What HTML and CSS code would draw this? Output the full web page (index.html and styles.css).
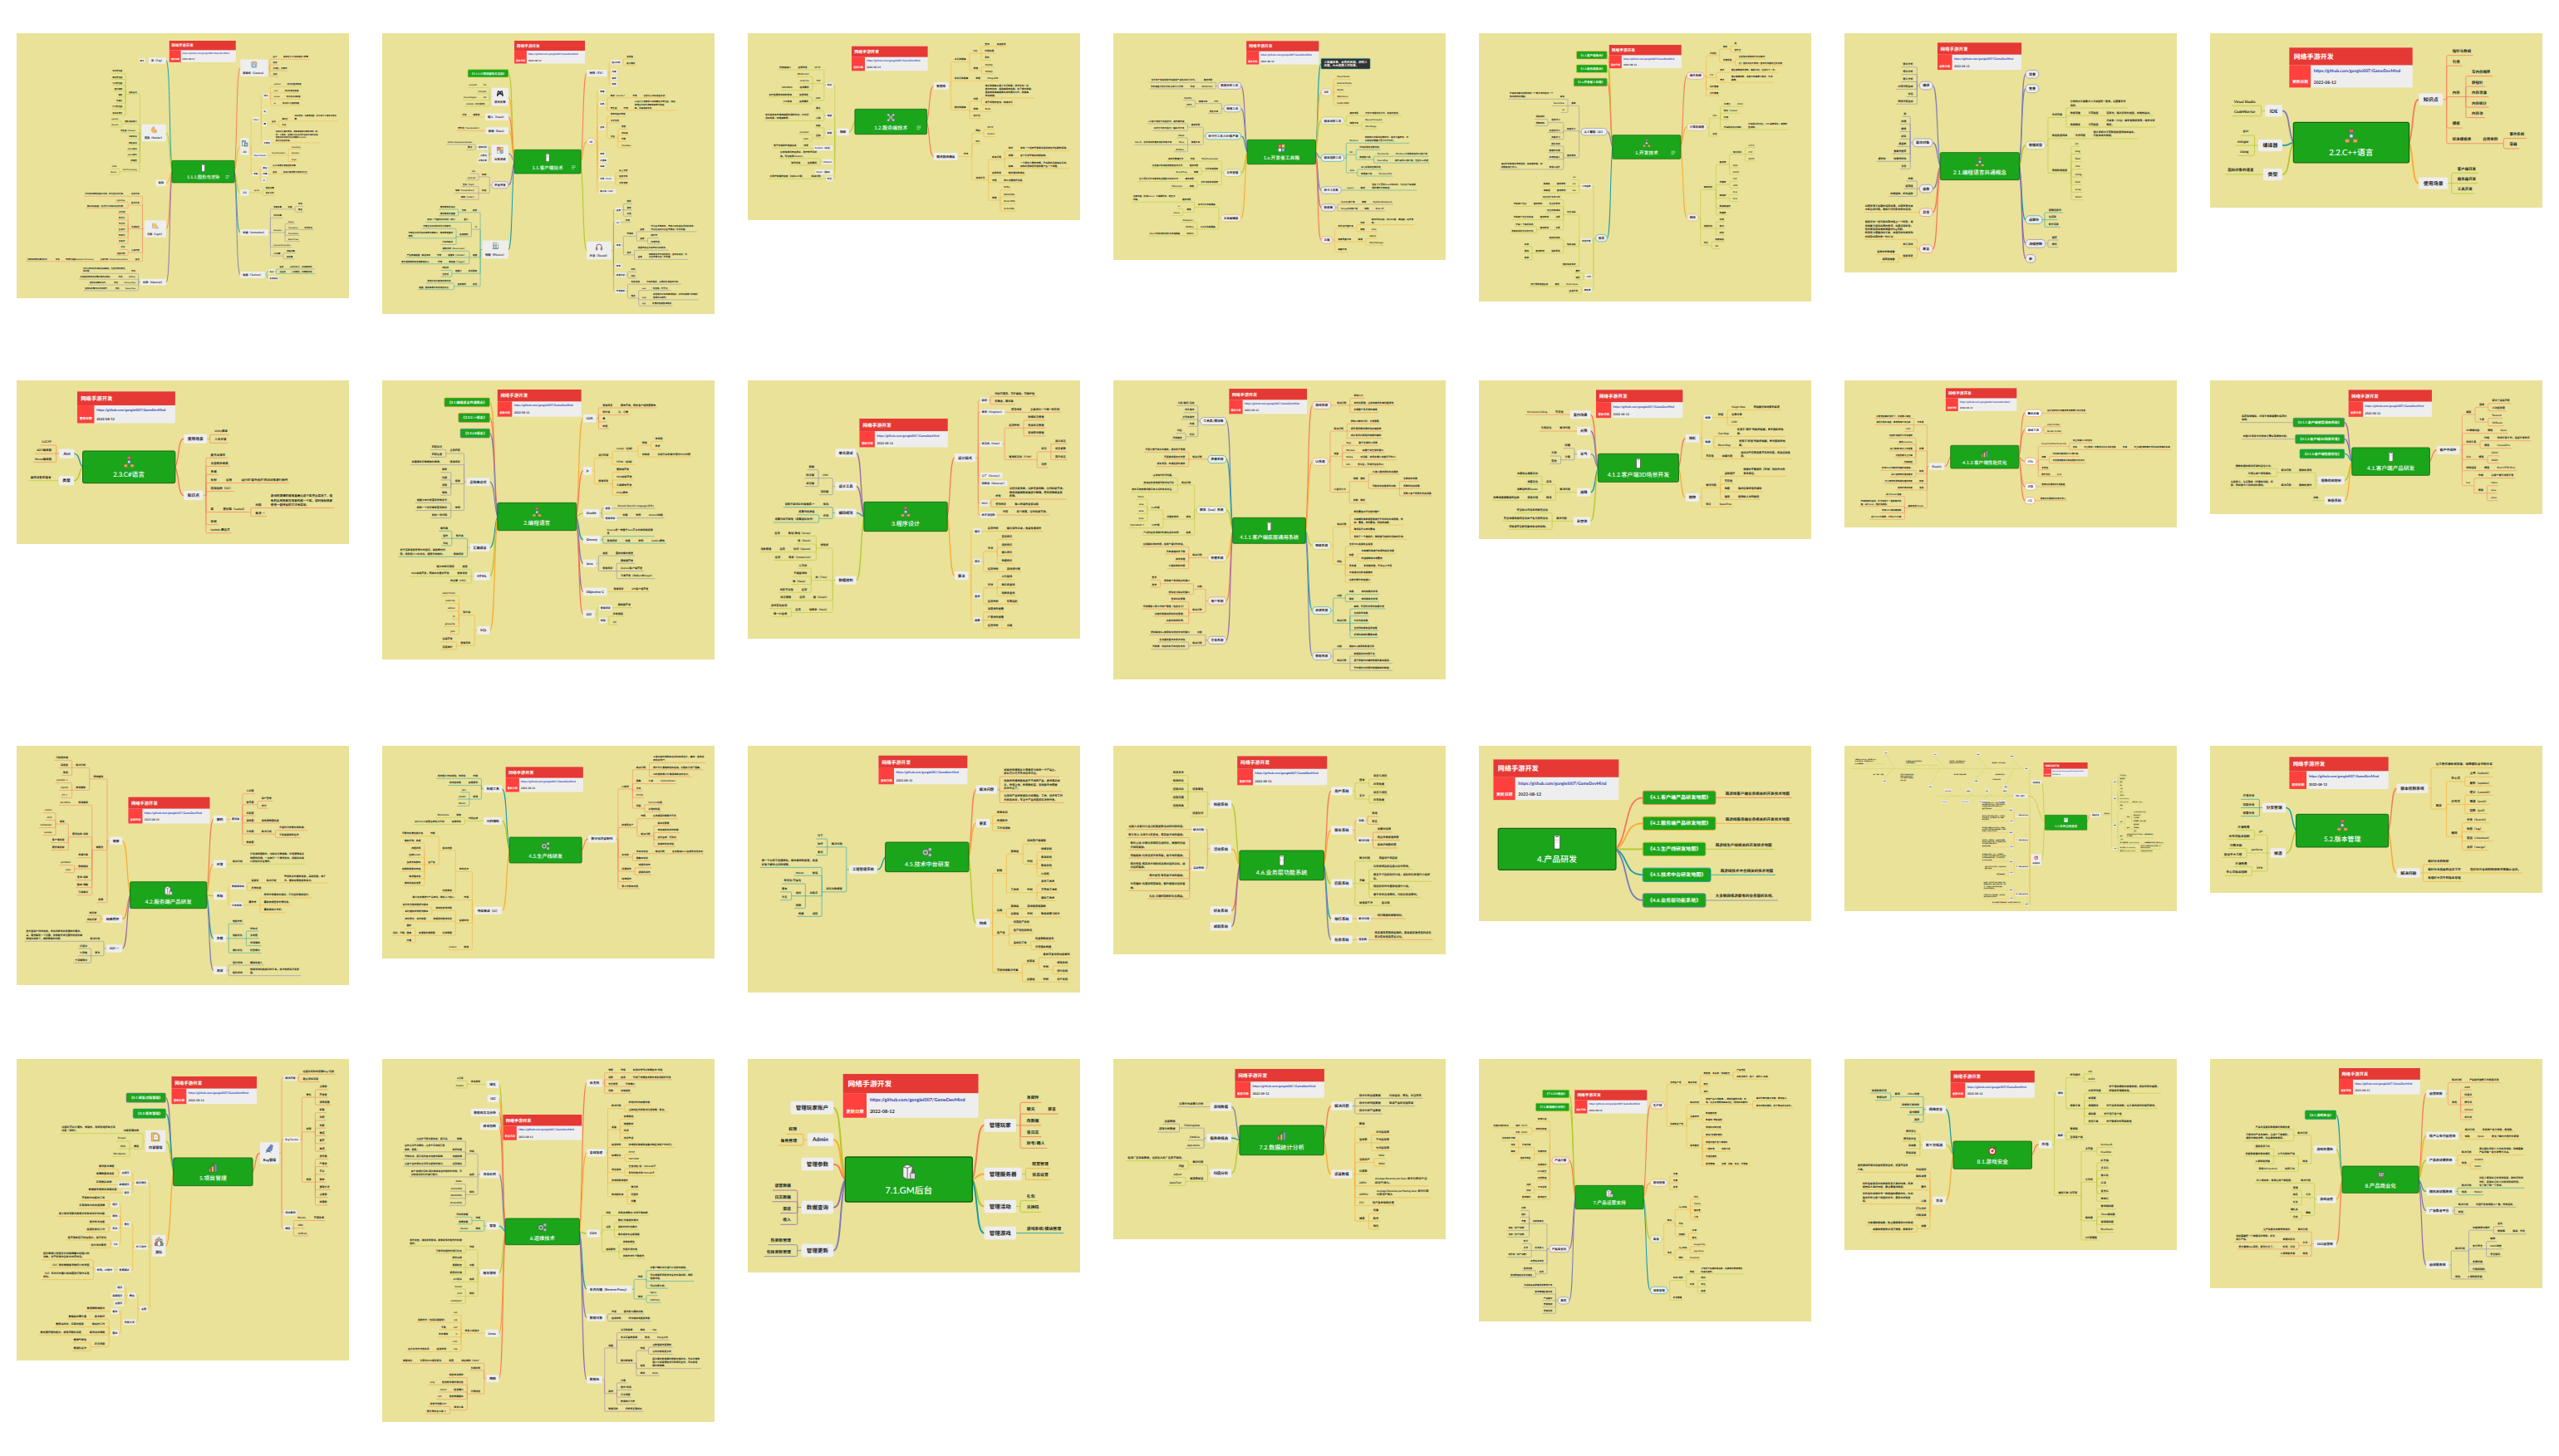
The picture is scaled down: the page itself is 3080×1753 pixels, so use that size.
FILE: index.html
```html
<!DOCTYPE html>
<html lang="zh-CN">
<head>
<meta charset="utf-8">
<title>网络手游开发</title>
<link rel="stylesheet" href="styles.css">
</head>
<body>
<main class="gallery" id="gallery"></main>
<script src="maps.js"></script>
<script src="render.js"></script>
</body>
</html>
```
FILE: styles.css
```css
* { box-sizing: border-box; }
body {
  margin: 0;
  background: #fff;
  font-family: "Lato", "Noto Sans CJK SC", sans-serif;
}
.gallery {
  display: grid;
  grid-template-columns: repeat(7, minmax(0, 1fr));
  align-items: start;
  gap: 80px 40px;
  padding: 40px 20px;
}
.map { margin: 0; background: #e9e298; }
.map svg { display: block; width: 100%; height: auto; }
text { fill: #222; text-rendering: geometricPrecision; dominant-baseline: central; }
.leaf { font-size: 15px; font-weight: 700; }
.topic { font-size: 20px; font-weight: 700; }
.topic-light, .hub-title { fill: #fff; }
.hub-title { font-size: 33px; font-weight: 500; text-anchor: middle; }
.card-title { font-size: 27px; font-weight: 700; fill: #fff; }
.card-label { font-size: 16px; font-weight: 700; fill: #fff; text-anchor: middle; }
.card-link { font-size: 17px; font-weight: 700; fill: #2638b8; }
.card-date { font-size: 17px; font-weight: 700; }
.start { text-anchor: start; }
.middle { text-anchor: middle; }
.end { text-anchor: end; }
.line { fill: none; stroke-width: 3; opacity: 0.85; }
.stem { fill: none; stroke-width: 6; }
.hub { fill: #1ba51b; stroke: #12610f; stroke-width: 4; }
.box { fill: #eee; }
.pill { fill: #eee; stroke-width: 3; }
.pale { fill: #fff; stroke-width: 3; }
.green { fill: #1ba51b; stroke-width: 3; }
.dark { fill: #333; stroke-width: 3; }
.card-head { fill: #e53935; }
.card-side { fill: #ff403c; }
.card-body { fill: #eee; }
```
FILE: maps.js
```js
// Each branch line: side, inner x, first leaf y, last leaf y, colours+shape, topic tree.
// {a;b} holds children, | breaks a line, # boxes a topic, @ names an icon.
// grid: left, top and horizontal step of the drawing's coordinates (vertical step is 3).
const MAPS = [
{ h: 319, grid: [18, 30, 1.8233], card: [353, 57, 146], hub: [359, 490, 496, 570, 'phone', '1.1.1.图形与渲染', 1], b: `
L 346 129 129 tg 雾（Fog）{#概念}
L 346 175 541 g 渲染（Render）@flame{渲染管线{顶点着色器;细分着色器;几何着色器;图元装配;裁剪;光栅化;片元着色器;测试与混合};图形渲染接口{openGL;DirectX};着色器（Shader）;深度测试;模板测试;Alpha测试;Alpha混合;抗锯齿;Post Processing{HDR;Bloom}}
L 346 571 571 o 遮挡
L 346 619 854 r 光照（Light）@light{动态光源{作为物体照明的基本光源，实时变化的光源。};静态光源{LightMap;预先烘焙贴图，运行时不会再有动态光照。};光源类型{点光源;聚光灯;平行光;区域光;环境光;自发光};全局光照{反射;间接光照};应用{全局光照（Global Illumination）{环境光遮蔽(Ambient Occlusion){作用{可模拟场景的漫反射光。}}}}}
L 346 898 960 pv 材质（Material）{作用{可定义物体的外观和渲染属性，包括光照的颜色|和纹理。};Diffuse{作用{此贴图体现物体表面的漫反射颜色。}};Normal Map{作用{使物体表面的凹凸。}};Bump Map{作用{使物体表面有凹凸的细节。}}}
R 509 124 186 r 摄像机（Camera）@camera{正交{通常用于2D游戏或者UI界面};透视;可视区、分屏显;渲染}
R 509 223 561 o 3D@cubes{#Mesh{#顶点{vertices{顶点的坐标数据};color{顶点的颜色数据};normal{顶点的法线数据};uv{顶点的UV坐标数据}};#边;#面{正向{顺时针{单向剔除，可提高性能，表示每个三角形可见的|面。};反向}};#子网格{用来定义复杂网格，能够根据顶点顺序绘制（形|状）三角形，使得可以在运行时渲染不同的材质，|性能优化的同时可以降低DrawCall，|最优化渲染方案。}};#Object Model{Transformation{Transform;Rotation;Scale}};#骨骼{#蒙皮{在3D场景的骨骼控制动画};#动画{应用{用来计算场景中物体的交互}};#IK}}
R 509 596 616 gl 2D{Sprite{精灵动画;粒子系统}}
R 509 655 845 tv 动画（Animation）{骨骼动画{权重{绑骨;蒙皮}};顶点动画;Animator{States;Transitions{动作状态};Parameters;Blend Trees};Inverse Kinematics;2D动画{骨骼动画;帧动画}}
R 509 882 915 vt 贴图（Texture）{#格式{压缩{占用内存小，加载速度快。};未压缩{占用更多，效果更清晰。}};#多级渐远}` },
{ h: 338, grid: [820, 30, 1.8233], card: [1110, 57, 155], hub: [1110, 451, 1256, 537, 'phone', '1.1.客户端技术', 1], b: `
L 1097 175 175 gG 《1.1.1.计算机图形与渲染》
L 1097 226 294 og 游戏引擎@pad{2D{cocos2d};Unity3D;3D{Unreal Engine};CHAOS（开元版权）}
L 1097 332 332 ro 输入（Input）{触摸屏{手柄}}
L 1097 382 382 or 数据（Data）{序列化（Serialization）}
L 1097 432 489 v 对象系统@blocks{#组件系统{Entity Component System;委托};#对象池;#对象引用}
L 1097 537 631 pP 平台开发{框架{iOS;Android};构建{签名（Sign）;编译（Compilation）;链接（Linker）}}
L 1097 666 956 t 物理（Physics）@machine{刚体{作用{模拟物体的运动;模拟物体的碰撞}};力{重力{施加一个恒定的方向的一致力。};应用案例{可用在有方向的冲击力的影响。;可用在水的浮动的弹簧的表面上，做弹簧碰撞的|表现。;汽车的驱动}};碰撞{弹性系数（Bounciness）;碰撞体（Collider）{作用{产生物理碰撞。触发事件}};触发器（Trigger）{作用{用于检测物体是否接触或进入。}}};射线检测{碰撞力{单射线;全射线}};射线{应用案例{游戏中命中检测的激光炮;碰撞，检测屏幕中的点是否存在。}}}
R 1269 123 214 ro 特效（FX）{#粒子系统{发射器;粒子循环};#光晕;#条带;#拖尾}
R 1269 241 601 oP UI{#原理;#布局{锚点（Anchor）{作用{位置大小自动适应方式}};安全区{作用{UI设计人员要求UI布局需位于安全区，保证|游戏在不同刘海屏等屏幕可视正|确，内容适配所有。}}};#控件{事件响应与传递;文字信息;交互{按钮;滚动条;列表;Checkbox}};#层级;#对话框;#动画;#字体（Font）{矢量字体;位图字体;文本渲染};#输入法（IME）}
R 1269 646 1015 gv 声音（Sound）@ears{#应用{音乐;音效;对话};#3D{环境};#混音{声源体{应用{作为主声源效果，声音从远处到达近处的效果。|可以在运动中对主声源进一步的处理。};应用{脚步声;环境声音}};监听{感受声音在不同声场中的效果。;应用{如脚本发声不同的音色，监听远处的，可|以在声源中进一步处理}}};#频率;#采集方式{实时;内存};#声音格式{有损压缩{不同的格式，占用的存储空间不同。};格式{wav{无压缩，尺寸大。};mp3{此压缩可以有效降低格式，对移动端用户较高的|音频可以取代。};ogg{免费的压缩音频格式}}}}` },
{ h: 225, grid: [18, 30, 1.8233], card: [246, 77, 167], hub: [253, 304, 411, 395, 'mol', '1.2.服务端技术', 1], b: `
L 240 162 556 g 网络{#协议{HTTP{应用场景{短连接接口}};TCP{WebSocket;socket.io;应用案例{MMORPG}};UDP{应用场景{实时性要求较高的游戏};应用案例{FPS游戏}}};#连接{握手;心跳{定时检查客户端连接服务器的状态，长时间|没有收到，则连接断开。}};#数据{加密;压缩{protobuf;nuite}};#Session（会话）{作用{用于存储用户连接信息}};#Channel{在游戏通讯的应用中，用户的不同频|道，可以使用Channel。;应用案例{聊天频道}};#Route（路由）;#安全{解决问题{对用户数据的加密（比如md5等）}}}
R 426 78 338 ro 数据库{关系数据库{SQL{查询{复合查询};存储过程;事务};候选{MySQL;MSSQL}};非关系数据库{候选{MongoDB}};缓存数据库{作用{减少数据库占据上访问数据，虽然也有一定|缓存的技术。但是越是高性能，有了缓存数据，|直接将数据库里面本身的缓存文件，数据库|所有数据。;用于频繁的查询。快速读写};候选{Redis};持久化}}
R 426 378 672 ro 服务器间通信{方法{网络{HTTP;Socket};RPC;消息队列{解决问题{异步{发出一个请求不需等待返回就执行后面的事情。};解耦{各个系统不相关的能依赖。};削峰{一个服务大量的处理，不会把自己给其它系统，|故障时再降低可能处理产生一个处理。}};应用场景{服务器间的通信};作用{防止流量破坏负载};候选{Kafka;RabbitMQ;RocketMQ;ActiveMQ}}}}` },
{ h: 273, grid: [820, 30, 1.8233], card: [1112, 58, 159], hub: [1114, 415, 1264, 503, 'blocks', '1.x.开发者工具箱'], b: `
L 1100 208 231 pvP 数据分析工具{应用场景{也可用于快速找到工程或者产品包中的大文件。};WinDirStat{作用{分析磁盘上的文件的占用大小分布}}}
L 1100 272 320 vP 网络工具{FTP{候选工具{FileZilla;XFTP}};抓包工具}
L 1100 357 458 tvP 命令行工具/SSH客户端{应用场景{ssh客户端用于远程访问，操作服务器;命令行工具可执行一些命令工具};候选工具{XShell;iTerm{Mac上，比系统自带更好用的终端工具};WinTerm}}
L 1100 492 590 gP 文件管理{TotalCommander{作用{高效的管理文件}};文件快速搜索{应用场景{在电脑上快速检索指定名的文件};候选{EveryThing}};文件内容快速搜索{应用场景{在大量的文件中搜索包含指定文本的文件};候选{FileLocator}}}
L 1100 640 762 ogP 文本编辑器{命令行文本编辑器{应用场景{在服务器（比如Linux）上编辑代码、配置文|件等。};候选{vi;emacs}};GUI文本编辑器{Notepad++;EditPlus;BBEdit{Mac上的好用好用的文本编辑器}}}
R 1276 140 140 tD 工欲善其事，必先利其器。好的工|具箱，大大提高工作效率。
R 1276 196 290 oP IDE{Visual Studio;Android Studio;XCode;Web Storm;IntelliJ IDEA}
R 1276 328 376 gP 版本比较工具{应用场景{分析不同版本的文件，快速的查找。};候选工具{Beyond Compare;Win Merge}}
R 1276 427 546 tP 版本控制工具{Perforce{非常强大的版本控制软件，适合大型项目，可|以使程序管理大量大尺寸文件。};Git{分布式版本控制系统;候选客户端{Tortoise Git{Windows上非常好用的Git客户端};SourceTree{跨平台的Git客户端，包含flow功能}}};SVN{中心式版本控制系统;候选客户端{Tortoise SVN}}}
R 1276 597 597 vtP 命令工具集{cygwin{应用{包含了大量的linux工具命令，可以在产品端做|简所有的工具集成。}}}
R 1276 648 672 pP 数据库{MySQL客户端{候选{MySQL Workbench}};MongoDB客户端{候选{Robo 3T}}}
R 1276 722 820 roP 文档{软件设计图工具{作用{编写代码之前，用UML图、流程图，设计表|现。};候选{Visio}};思维导图工具{候选{XMind;Mind Manager}};画图工具}` },
{ h: 323, grid: [12, 30, 1.2062], card: [201, 72, 105], hub: [206, 398, 305, 484, 'tree', '1.开发技术', 1], b: `
L 198 109 109 oG 《1.1.客户端技术》
L 198 158 158 gG 《1.2.服务端技术》
L 198 207 207 rtG 《1.x.开发者工具箱》
L 198 268 522 vP 人工智能（AI）{基础{算法{计算机用来识别物体和一个有多年的程序一个|知识结构的模型。};TensorFlow;AI};机器学习{监督学习{线性回归;逻辑回归};无监督学习;深度学习};应用案例{图片识别;语音与对话;自动机器人;游戏AI设计{通过分析来编写游戏智能，提高胜率等，训|练数据进行学习。}}}
L 198 559 969 tgP 数学{#几何函数{sin;cos{应用案例{弧度角}};tan{应用案例{弧度值}}};#线性代数{向量运算{向量是什么与几何;向量的乘法{应用案例{计算两个向量}};向量的加减法;点乘{应用案例{计算两个向量的夹角}};叉乘{应用案例{计算一个面的法线;求解法线的方向的方向}}};矩阵运算{矩阵的加法;矩阵乘法{应用案例{平移;旋转;缩放}}};矩阵快速求逆};#几何{圆形;矩形};#随机数{Perlin Noise{应用{用于游戏地图生成}};正态分布}}
R 314 75 256 roP 操作系统{多线程{概念{锁;信号量};构建线程{在线程中使用同步内存操作;在一些的内存不够用一些的时间空间量的资源}};I/O{同步{指在等待操作结果，等执行完，在执行下一步。};异步{指在等待结果，用来不同等待下来的，不用|等待。}};内存管理;文件管理}
R 314 295 402 ogP 计算机原理{CPU{多核量{CPU2};缓存（Cache）;时钟;计算机的内存读取{多级缓存的存在，CPU会有缓存。需要的|查找数。}};总线}
R 314 443 808 ogP 网络{网络协议{应用层{常见协议{HTTP;FTP;SMTP};DNS;DHCP};传输层{TCP;UDP};网络层{IPv4;IPv6};数据链路层;物理层};加密协议{对称;非对;哈希};安全{加密通信;SSL}}` },
{ h: 288, grid: [543, 30, 1.2062], card: [678, 64, 122], hub: [682, 461, 797, 560, 'tree', '2.1.编程语言共通概念'], b: `
L 671 152 286 vP 编译{语法分析;词法分析;语义分析;中间代码生成;优化;目标代码生成}
L 671 331 520 vP 面向对象{类;构造;继承;封装;虚函数;重载与重写;构造与析构{虚析构};多态}
L 671 564 619 vP 函数{参数;返回值;构造函数、析构函数}
L 671 677 677 roP 异常{出现异常不处理的错误处理，出现异常时会|中断后续代码，造成不好的影响等的错误。}
L 671 775 857 roP 断言{在程序的一些可能出现的路上一个断言，用|来检查不应该出现的情况。如果没有断言，|有时候错误会造成难查的Bug问题。|断言是方便查找的工具。会在测试时候有效|的找到出现的第一的方法。;单元测试;应用场景{函数的参数检查;返回值检查}}
R 806 178 178 vP 常量
R 806 230 230 vP 变量
R 806 300 632 gP 数据类型{考虑问题{计算机内不需要大小浮点型是一整数，后面要考虑|选择。;数据范围{不同类型{运算时，超出它有的类型，会造成溢出。}};数据精度{不同类型{浮点数（32位）用来在精度有限，用来比较|精度。}}};数值类型转换{考虑问题{在计算机中不同数值类型转换会溢出，|可能会丢失数据。}};常用数据类型{int;long;float;char;string;bool;array;struct}}
R 806 678 730 tP 运算符{逻辑运算符;位运算;数学运算}
R 806 777 803 vP 流程控制{循环;顺序}
R 806 844 844 pP 宏` },
{ h: 210, grid: [1073, 30, 1.2062], card: [1188, 82, 179], hub: [1194, 352, 1362, 498, 'tree', '2.2.C++语言'], b: `
L 1178 292 329 vg IDE{Visual Studio;CodeWarrior}
L 1178 399 472 tg 编译器{gcc;mingw;clang}
L 1178 540 540 g 类型{面向对象的语言}
R 1376 110 447 r 知识点{指针与数组;引用;内存{写内存越界;野指针;内存泄漏;内存统计;内存池};模板;标准模板库{应用举例{事件系统;容器}}}
R 1376 535 609 og 使用场景{客户端开发;服务器开发;工具开发}` },
{ h: 197, grid: [18, 24, 1.8233], card: [151, 64, 215], hub: [163, 279, 366, 395, 'tree', '2.3.C#语言'], b: `
L 144 258 319 tr .Net{IL2CPP;AOT编译器;Mono编译器}
L 144 386 386 g 类型{面向对象的语言}
R 385 220 250 r 使用场景{Unity脚本;工具开发}
R 385 304 575 r 知识点{委托与事件;泛型和系统类;多维;反射{应用{运行时“自外而内”的对对象进行操作}};垃圾回收（GC）;类{密封类（sealed）{问题{游戏的逻辑的播放里最让这个类停止实现了，但|有的应用需要在需要构建一个类。这时候就需要|使用一些特定的方法来实现。};解决 ☞}};协程;lambda 表达式}` },
{ h: 336, grid: [820, 24, 1.8233], card: [1073, 57, 184], hub: [1073, 466, 1246, 566, 'tree', '2.编程语言'], b: `
L 1056 103 103 oG 《2.1.编程语言共通概念》
L 1056 159 159 rG 《2.2.C++语言》
L 1056 215 215 vG 《2.3.C#语言》
L 1056 274 521 v 正则表达式{正则匹配{匹配字符;匹配位置};使用场景{处理跟字符串相关的事情。};应用{判断;切割;获取;替换};举例{检查文本中是否有非数字号;判断一个字符串是否是数字;提前一段代码}}
L 1056 568 661 t 汇编语言{知识点{寄存器;指令;寻址};使用场景{对于运算速度非常大的程序，用底层的代|码。特别是C++的优化，通常手动做的。}}
L 1056 707 756 g HTML{类型{超文本标记语言};使用场景{Web前端开发，网络内内置的开发};样式表（CSS）}
L 1056 802 996 o SQL{知识点{select from;order by;where;in;group by;join};使用场景{后端开发;运营维护}}
R 1261 123 199 or LUA{使用场景{脚本开发，例如客户端热更脚本};知识点{元、元表};表;协程}
R 1261 245 439 ro js{运行环境{nodejs（后端）{特性{单线程;异步};优缺点{优点可以利用大部分IO文件即}};HTML（前端）};使用场景{服务端开发;Web前端开发;工具脚本开发;Unity脚本}}
R 1261 486 521 gv Gradle{#类型{Domain Specific Language (DSL)};#使用场景{构建{举例{Android构建}}}}
R 1261 587 612 t Groovy{Groovy是一种基于Java平台的动态编程语|言;使用场景{构建{举例{Jenkins脚本}}}}
R 1261 657 740 v Java{类型{面向对象的语言};使用场景{服务器开发;Android客户端开发;工具开发（比如ant的target）}}
R 1261 787 787 po Objective C{使用场景{iOS客户端开发}}
R 1261 845 907 rg GO{#使用场景{服务器开发};#特性{并发编程;GC}}` },
{ h: 311, grid: [18, 24, 1.8233], card: [263, 162, 194], hub: [273, 463, 456, 569, 'tree', '3.程序设计'], b: `
L 256 286 286 p 单元测试
L 256 347 437 pv 设计工具{UML{类图;时序图;状态图};流程图}
L 256 482 537 t 编码规范{候选{谷歌开源项目风格指南 ☞};作用{提高代码质量;提高代码可读性（提高团队协作）}}
L 256 586 877 g 数据结构{线性表{数组/数组（Array）{应用};栈（Stack）;队列（Queue）{应用{消息管理}};链表（Linked List）{应用}};树（Tree）{二叉树;多路查找树;堆（Heap）;应用{场景可见性}};图（Graph）{应用{状态管理}};哈希表（Hash）{应用{文件变化检测;唯一ID生成}}}
R 472 82 510 r 设计模式{#原则{代码可复用、可扩展性、可维护性;低耦合，高内聚};#单例（Singleton）{使用场景{全局访问一个唯一的实例}};#状态机（State）{应用举例{网络状态管理;登录状态管理;游戏房间管理};有限状态机（FSM）{状态{进入状态;状态更新;离开状态};迁移}};#工厂（Factory）;#观察者（Observer）;#MVC{好处{让程序更清晰，让责任更明确，让代码更可读。|将表现层跟数据层进行解耦，使你逻辑跟业务|逻辑。};使用场景{有UI界面的业务功能}};#异步流控制{作用{减少嵌套，让代码更可读。}}}
R 472 569 919 o 算法{#遍历{应用举例{遍历文件目录，批量处理文件}};#排序{方法{冒泡排序;选择排序;插入排序;快速排序};应用举例{游戏排行榜}};#查找{方法{二分查找;顺序表查找;哈希表查找};应用举例{玩家匹配}};#搜索{深度优先搜索;广度优先搜索;应用举例{寻路}}}` },
{ h: 360, grid: [820, 24, 1.8233], card: [1074, 54, 171], hub: [1082, 520, 1242, 613, 'phone', '4.1.1.客户端底层通用系统'], b: `
L 1068 115 240 vP 工具类/模块集{分割/路径/压缩;文件操作;字符串操作;协程;时间{时区;日期格式}}
L 1068 283 335 trP 声音系统{解决问题{声音分量于统关的播放，便有处于管理;声音播放需有对内容;便有背音、处理后音的播放}}
L 1068 376 583 gP 脚本（Lua）系统{解决问题{让游戏代码可热更。;游戏业务逻辑便可脚本化开发;脚本系统快速层跟系统之间的有机交互。};候选{热更新脚本{Lua方案{ToLua;sLua;uLua;xLua};C#方案{HybridCLR ☞}}};应用{产品的业务逻辑代码都在此层实现}}
L 1068 625 704 orP 热更系统{解决问题{在线更新游戏内容，给用户更好的体验。;可带着程序资下载;异常处理;大更新做到内容}}
L 1068 745 902 rP 用户系统{功能{提供用户登录相关的接口{登录;登出};提供支付相关的接口};解决问题{登录状态管理;可快速接入第三方账户管理（包含支付）;完善的数据流提供状态管理。;完善的异常反馈。}}
L 1068 943 995 pP 文本系统{功能{提供通过Key来获取本地化文本的接口};解决问题{支持更有更文本多本地化;可快速、动态的实行本地化文本}}
R 1257 88 140 rP 游戏系统{解决问题{游戏入口;自动化管理，让游戏底层的启动更清晰;负载整个多系统的启用}}
R 1257 181 467 orP UI系统{解决问题{提供UI编的分层、分类管理;便可用页面切换的动态编排效;减少多资利用性的加载的结构};类型{Page{整个全屏的UI页面};Window{如整个会全部的窗口};Dialog{对话框、有特定确认流程打开的UI};Info{无交互，只展示信息的UI}};UI显示分为{隐藏、播放{UI进入播放便有动态播放;可能有动态播放的功能{全屏过场切换;页面的动态切换;页面上各个元素的动态切换}};加载、释放}}
R 1257 507 754 gorP 网络系统{解决问题{断网重连对不全能修整个;对底端网络数据管理进行不同层的封装管理，例|如：重播，自动重连，网络断连等。;降低后可以自动重连;提供了一个播报层，降低程开销级的网络内系统。};特性{支持Http连接有主连接;加密{对底端网络进行加密响应及处理;防温器降级传送重放};多线程{多线程处理，不会让UI卡顿};长连接支持多连接播放;完善的事件响应接口}}
R 1257 797 953 tP 资源系统{功能{加载{自动加载的资源};释放{自动释放的资源}};解决问题{高效、可预好资源的加载方式;支持异步加载;分优先级加载;支持预加载有后续加载;资源的依赖的重载加载}}
R 1257 994 1072 vP 数据系统{功能{通过Key来获取数据记录};解决问题{数据驱动的内容开发;基于表格的对结构数据的更新更强。;可方便的对内容的数据做维的数据。}}` },
{ h: 191, grid: [12, 24, 1.2062], card: [182, 58, 126], hub: [185, 289, 302, 391, 'phone', '4.1.2.客户端3D场景开发'], b: `
L 174 148 148 r 室内场景{可见性{Occlusion Culling}}
L 174 207 207 vr 光照{解决问题{光照变化}}
L 174 269 325 v 天气{阴霾;分级{光照;雨雪}}
L 174 371 457 tg 道路{解决问题{装饰{水面和立路面变化;地面变化;海岸边夹的Shader};隧道{隧道问题{海岸线播播需要的区域}}}}
L 174 503 562 g 天空体{解决问题{天空体从日而来的颜色变化;天空体播放器的变化会产生光照的变化;带处接天空颜色图单和过场启动。}}
R 312 131 308 ro 地形{#地貌{种植{Height Map{用贴图记录地表的高度};运算计算;LOD}};#贴图{Text Map{是游手“细方”的贴的贴图，参考最新的地|质。};Blend Map{是游手“权值”的贴的贴图，参考最新的地|貌。}};可见性{加载问题{关闭对于玩家能看不见的内容，提高渲染性|能。}}}
R 312 370 482 o 植物{解决问题{自动随开{根据对于需要的（环境）特别方向的|事件感应。};可见性;动画{指对应有特性的晃动};碰撞{植物和人对的碰撞}};特点{SpeedTree}}` },
{ h: 177, grid: [543, 24, 1.2062], card: [690, 52, 103], hub: [697, 259, 796, 342, 'chart', '4.1.3.客户端性能优化'], b: `
L 688 161 526 r Graphic{工具类{对使用前期的情形下，多真像UI绘图;接近于性状态图，降低游戏工具在面;LOD};材质{与图形处理分不优化越层;避免Overdraw;减少使用2层大小的查看;大性能需大量计算;光照贴图};网格{考虑Mesh顶面的处理状态建图。;减少程序层的性能需求};阴影{尽量用移动游戏端处理的阴影};渲染{关闭环境无场景};复杂渲染 Shader{减少Shader程度;分解阴影的区域，多方是到了一些角落的处|理，减少pixel，性能连接图。;考虑GPU端处理部类;减少GPU计算数，不利GPU计算}}
R 805 142 142 rW 美术风格{设计前项目不同需求效果素质上处于情景}
R 805 191 215 rW 测试工具{Unity Profiler;Render Profiler}
R 805 250 371 rW CPU{Draw Primitive/Draw Call{批量处理CPU的技术;批处{尽量做到一次更新内存之内的渲染{合并{尽量减轻降低需对所有运动层算的总算}}}};逻辑{可能每次更新的CPU做计算;可能使用更新对动态性能中的内不};多线程;数学优化{GLSL}}
R 805 408 408 rW 内存{使用内存播放的存储类型}
R 805 458 458 rW I/O{使用内存播放的存取文件io}` },
{ h: 161, grid: [1073, 24, 1.2062], card: [1274, 58, 121], hub: [1279, 267, 1392, 367, 'phone', '4.1.客户端产品研发'], b: `
L 1268 176 176 pvG 《4.1.1.客户端底层通用系统》{底层系统框架，所有开发都需要的底层的|系统。}
L 1268 236 236 vG 《4.1.2.客户端3D场景开发》{构建3D场景中的物体元素以及相关内容。}
L 1268 289 289 tgG 《4.1.3.客户端性能优化》
L 1268 343 413 g 摄像机和控制{摄像机视角{解决问题{摄像机播放移动某游的变化方法。;可视让用户视角播放。}};摄像机操作{解决问题{让画面小、让正确放（对播放动画，切|换，例如在大小就自动的视线。}}}
L 1268 458 458 og 新版系统{功能}
R 1402 107 458 r 客户中间件{模型{应用{解决了连接问题;UI动画管理};工具{Tweener;HoTween}};2D骨骼动画{候选{Spine}};测试工具{作用{测试开发工作，连接开发效率};候选{ConsolePro}};GUI{候选{UGUI;NGUI}};网络连接{候选{Best HTTP (Pro)}};Lua{作用{让用户端可动态开发};候选{toLua;sLua;uLua}}}` },
{ h: 288, grid: [18, 24, 1.8233], card: [263, 209, 179], hub: [267, 515, 435, 611, 'server', '4.2.服务端产品研发'], b: `
L 250 76 590 or 框架{传统框架{解决问题{可快速伸缩;高性能;稳定};候选框架{pomelo ☞;skynet;ET ☞}};微服务{候选框架{Go Micro};服务注册/发现{候选{consul;etcd;zookeeper;eureka};客户端发现;服务端发现};负载均衡;数据编码{protobuf;json};重试/熔断;路由/链路;可视端口};部署}
L 250 637 661 r 网络同步{帧同步;状态同步}
L 250 730 808 pv AOI ☞{解决问题{当大量用户同时在线，状态同步时会有播放的需求。|点。服务都有一个范围，仅提醒与该范围与附近的相|关性的前面下，做到数据的同步。};算法{灯塔法;九宫格;十字链表法}}
R 450 197 382 r 架构{#服务器{入口服;账号服{用户登录;支付};匹配服;游戏服{游戏逻辑服处理};日志服{解决问题{大量的日志缓存和处理。;不能阻塞游戏业务}};数据服}}
R 450 451 451 og 开发{解决问题{开发游戏服操作，比如访问数据库，所有逻辑用多|线程时间慢。一次执行一个事务发布，则避免出现|CI阶段的交互事件。}}
R 450 519 626 go 系统{#数据库系统{连接池{解决问题{节省很多的播放性能，采用创建，由于|大、播放前期性能较高大。}};异常处理};#日志系统{要考虑{提供所有播放的接口，不对业务造成压力。;要能快速查到对等信息。;要能做统计分析。}}}
R 450 667 772 t 负载{性能分析;性能优化{分布式;多进程;分流播放};缓存优化{热查缓存}}
R 450 816 854 v 测试{压力测试{模拟机器人};接口测试{快速测试功能接口的工具，极大地提高开发质|量。}}` },
{ h: 256, grid: [820, 24, 1.8233], card: [1091, 100, 170], hub: [1099, 354, 1258, 447, 'gears', '4.3.生产线研发'], b: `
L 1083 142 241 t 构建工具{作用{将构建工作流规化、自动化};应用案例{游戏包构建};候选{Ant;Gradle;Maven}}
L 1083 283 308 g 代码辅助{代码生成{候选{WinAntora};应用举例{以Protocol批量生成定义代码}}}
L 1083 350 760 o 持续集成（CI）{自动任务{版本构建{作用{可等待批量性能分包};生产包{最新资源、数据;构建资源;生成bundle;生成安装脚本;应用数据版本构造;编译整体包;输出线指定位置}};内部渠道};作用{最大化快速提升产品自动，降低人力投入。};应用举例{游戏包自动构建{定时安全服构建提交版本;实时播放资源提测脚本};数据表构建自动化{自动提交、发布数据};运维管理{批量服务器管理{更新;停机、开服、重启;修复}}};候选{Jenkins}}
R 1272 85 540 r 数字化内容制作{UI制作{解决问题{工具对应的清晰和支持的如何设计，美术、程序及|自动协作产。;提升代大量最效化的空格，对图片凸透厂图集。;UI的播放用力分最逻辑解决的定义。};图集{工具{TexturePacker}};字体;Prefab;动画{Tweener功能;关键帧动画}};数据表生产{作用{让数据驱动最理代开发};解决问题{版本化管理;自定格式化的的数据;定时生成：可测试;数据自动化校验}};本地化{文本本地化{解决问题{支持通过Excel生成多地化文本}};图集本地化};场景制作{地图层制作;逻辑层制作};特效制作;第三方脚本内容}` },
{ h: 297, grid: [18, 24, 1.8233], card: [305, 59, 195], hub: [320, 372, 503, 479, 'gears', '4.5.技术中台研发'], b: `
L 302 360 640 t 工程管理系统{解决问题{分工;协作;复用};项目对象模型{将一个大的工程播放化，做出模块的部署，有更|好有个模块之间的依赖。;候选{Maven};功能点{规范化/可量化;坐标{版本;分支};依赖};过程{构建}}}
R 519 135 229 r 解决问题{如果你的播放从头搭建是分享的一个产品上，|那么可以也不考虑技术中台。;如果你的播放最性更多不同的产品，要快速启动|目，快速上线，快速做配置，用就要考虑搭建|技术中台了。;让游戏产品研发团队比如底层、工具、技术等工作|中脱离出来，专注于产品内容和玩法的开发。}
R 519 276 331 o 要素{简单易用;快速制作;工作流清晰}
R 519 378 877 go 构成{前端{基础层{游戏客户端框架;举例{网络系统;资源系统;数据系统;UI系统}};工具类{举例{文件工具类;字符串工具类;编码工具类}}};后端{基础层{游戏服务端架构};运营层{举例{数据采集与统计}}};生产线{内容生产系统;生产流程和规范;自动化工具{热更新数据发布;日常版本构建}};可视持续解决方案{业务层{各种可复用的功能模块;举例{成就系统;排行系统}};运营层{举例{用户系统}}}}` },
{ h: 251, grid: [820, 24, 1.8233], card: [1092, 61, 197], hub: [1097, 402, 1282, 509, 'phone', '4.6.业务层功能系统'], b: `
L 1079 131 279 g 技能系统{技能属性{释放条件;释放时长;技能目标;技能范围;技能效果};技能队列}
L 1079 326 577 or 活动系统{#解决问题{运营人员要可以自己配置更新活动时间和内容。};#活动举例{新手登入-玩家头X天登录，每天给不同的奖励。;每日上线-计算玩家每天在线时长，根据时长给|不同的奖励。;等级奖励-玩家达到不同等级，给不同的奖励。;每日任务-每天去不同系统达成对应的目标，给|对应的奖励。;每日虚签-每天给不同的奖励。;日常福利-充值到特定档位，额外赠送对应的奖|励。;礼包-可随时定制的礼包商品。}}
L 1079 619 619 r 好友系统
L 1079 676 676 p 成就系统
R 1298 144 230 rg 用户系统{登录{状态与流程;异常处理};支付{状态与流程;异常处理}}
R 1298 279 393 or 聊天系统{#功能{频道;禁言};#解决问题{关键词过滤;防止快速发送频繁;有同步刷新的提}}
R 1298 441 601 g 匹配系统{解决问题{海量用户的匹配};方案{玩家请求匹配后进入队列等待。;建立多个匹配队列小组，组队的玩家进行小组排|队。;按匹配条件为查找组进行小组。;基于条件在找房间，分配玩家到房间。};候选第三方{亚马逊}}
R 1298 648 648 tr 排行系统{#解决问题{排行数据的刷新时间。}}
R 1298 724 724 vr 任务系统{#任务链{任务通常是链式结构的，最有最前里任务的状态|来决定家任务是否可见。}}` },
{ h: 211, grid: [12, 24, 1.2062], card: [33, 73, 182], hub: [40, 322, 211, 472, 'phone', '4.产品研发'], b: `
R 250 211 211 rG 《4.1.客户端产品研发地图》{跟游戏客户端业务相关的开发技术地图}
R 250 304 304 oG 《4.2.服务端产品研发地图》{跟游戏服务端业务相关的开发技术地图}
R 250 397 397 gG 《4.3.生产线研发地图》{跟游戏生产线相关的开发技术地图}
R 250 490 490 tG 《4.5.技术中台研发地图》{跟游戏技术中台相关的技术地图}
R 250 582 582 vG 《4.6.业务层功能系统》{大多数网络游都有的业务层的系统。}` },
{ h: 199, grid: [543, 24, 1.2062], card: [832, 84, 64], hub: [834, 274, 895, 328, 'doc', '5.1.研发过程管理'], fish: 1, b: `
L 829 156 156 g 项目管理
L 809 205 205 g 冲刺（迭代）
L 829 255 596 gor 研发目标@target{#一、项目的启动阶段{#目标{讨论出现和大的方向，是必有力发挥的，|确立明确在执行的方向，确定有最高的，|看到最后做得的启动的清晰的方向。|提高有序的推进。};#内容{确定各个团队和部分的要求，并有启动，|用于当启动、执行相关的过程，管理。|确定流程控。}};#二、项目的研发阶段{#目标{每次启动主要解决的任务完成，对相关，|大力保证产品开发的进度与质量，和规范|研发各个系统的工作流程。};#内容{每天早会、每周例会，并最终完成周期|都有执行相关的处理。对于最终的的完成|和产品确认进度以及风险。|最后做好复盘。}};#三、项目的测试阶段{#目标{测试相关的流程、功能、性能等测试，|这个是整个产品的质量的保证。提前做好|对应的测试用例的准备，各个部门配合|进行BUG的修复。};#内容{对整个产品进行回归，性能测试以及|兼容性测试。;确定版本质量。}};#四、项目的运营阶段{#目标{由运营、市场对产品进行相关推广等，|研发要做好线上相关问题的处理，以及|下一个版本的内容的研发与测试。|配合做好各项活动。};#内容{持续对产品进行版本更新，修复问题，|做好数据的分析和优化。}};#总结{每个阶段都有明确的目标，做好每个阶段的工作。}}
R 900 136 409 rg 敏捷开发{解决问题{#角色{产品负责人;敏捷教练;团队;用户};#流程{计划;站会;评审会;Sprint Planning;Daily Meeting{每日站会（Daily）};回顾};#看板{需求;任务{开发{需求拆分为多个任务;确定优先级;任务进度;每日更新、确认进度};测试{提交测试;回归测试;完成}};发布{对完成的任务进行打包发布，需要回归测试并|进行复盘。};上线};#文档{用户故事列表（Product Backlog）{需要按照优先级进行排列的需求。};迭代列表（Sprint Backlog）{此迭代内需要完成的任务列表，由|团队拆分并估时。};燃尽图（Burndown Chart）{可视化的剩余工作量}}}}` },
{ h: 177, grid: [1073, 24, 1.2062], card: [1188, 64, 144], hub: [1198, 271, 1332, 390, 'tree', '5.2.版本管理'], b: `
L 1183 217 278 t 分支管理{开发分支;功能分支;修复分支}
L 1183 329 493 g 候选{git{开源免费;分布式版本控制};perforce{付费系统;适合于大工程};SVN{开源免费;中心式版本控制}}
R 1344 103 401 ro 版本控制系统{让工程资源有效管理、保障团队合作和分享;概念{中心式{上传（submit）;更新（update）};分布式{提交（commit）;推送（push）;拉取（pull）};通用{分支（branch）;标签（tag）;签出（checkout）;合并（merge）}}}
R 1344 452 514 o 解决问题{做好分支的规划;做好分支层面的合并工作{在好好开合同的规划和冲突确认合并。};处理好大文件的版本管理}` },
{ h: 363, grid: [18, 21, 1.8233], card: [358, 84, 187], hub: [362, 378, 536, 479, 'chart', '5.项目管理'], b: `
L 345 161 161 pG 《5.1.研发过程管理》
L 345 218 218 tG 《5.2.版本管理》
L 345 290 373 g 内容管理@file{内容管理系统{让团队可以方便的、快速的、有规范组织和分享|内容（资料）。};候选{Drupal;Wiki;Wordpress}}
L 345 418 1075 o 团队@people{#程序角色{#主程序{解决技术难题;保障质量和进度};#高级程序{实现复杂系统};#程序{根据要求完成系统或功能}};#分工协作{#角色{#程序{开发制作内容的工具;实现游戏中的功能逻辑};#策划{定小数字等部的数据分析和体设计的内容};#美术{制作美术内容;给团队做化工作};#QA{在开发和运行的过程中，进行测试;设计测试用例}};#使用模式{#举例，UI制作{程序根据UI原型设计对编辑图中创建UI的|对象，并于有操作后续中访问的流。;（UI）策划根据需求做好UI的原型;（UI）美术针对图片和动画进行制作以及|优化。}}};#主题{#岗位{#程序;#高级程序;#主程序};#考核方法{#笔试{看逻辑思维能力};#面试{技术知识{看储备的事件量};做过的工作{看完过的功、实现的程度};解决过的难题{看处理问题的能力、发现问题的深度};其它问题{看脾气秉性;看团队合作}}}}}
R 552 76 660 r Bug管理@bug{#解决问题{让团队有效的管理Bug/任务;建立测试流程};#Bug Tracker{角色{上报者;开发者;项目经理};状态{新建;分配;修复;验证;重开;关闭};信息{优先级;严重度;平台;版本;重现方法;上报者;处理者}};#测试用例;#候选{Mantis{开源免费};JIRA;JetBrain}}` },
{ h: 437, grid: [820, 21, 1.8233], card: [1085, 222, 173], hub: [1090, 597, 1253, 692, 'gears', '6.运维技术'], b: `
L 1076 99 126 g 域名{域名解析{A记录;Cname}}
L 1076 164 164 o IDC
L 1076 214 214 r 数据日志与分析
L 1076 264 264 r 成本控制
L 1076 318 550 v 消息队列{作用{解耦{让业务下模块更独立、更灵活。};异步处理{业务之间不必等待，让多个系统运行更|高效、更稳。};流量削峰{可使有流、更灵活的应对流量的高峰。};消息通信{让各个业务模块之间可以更快的通讯。}};应用{各个游戏的系统/模块做成独立的服务的时候，可|以使用消息队列进行通讯。};候选{Kafka;ActiveMQ;RabbitMQ;RocketMQ}}
L 1076 592 643 t 容器{作用{可持续部署;快速部署};候选{Docker}}
L 1076 697 904 g 服务发现{作用{将大批量，通过发现使用，能做到多的服务的处理|服务。;了解所有服务的运行状态};功能{服务注册;健康检查;键值对存储};应用{API网关};候选{Consul;etcd;zookeeper}}
L 1076 946 1078 o Linux{常用工具指令{ssh;scp{复制文件（包括远程复制）};curl{下载};vi{文本编辑};cron;top{应用举例{在日志文件中查信息}}}}
L 1076 1120 1302 r 网络{域名解析（DNS）{配置{付费的DNS服务更优{链接减少}}};负载均衡;问题排查{检查域名解析;检查服务器的稳定性{ping};检查端口{telnet};检查链路路由{mtr};候选工具{游戏方地图APP;腾讯云综合工具 ☞}}}
R 1269 71 145 r 云主机{快照{作用{此保存是可以快速生成/恢复}};镜像{应用{可用于快速生成服务或者用服务环境}};安全配置{开放端口};网络{流量控制}}
R 1269 187 545 o 全球加速{解决问题{实现好的的加速传输;让跨地区的网络访问更快速、稳定。};类型{加速通道;链路解析;回源;边缘节点};应用举例{游戏服务器通常需要对跨区域用户的访问。};加速协议{HTTP;TCP/UDP};域名指向{全量流量/省：200ms以下;实时传输资源/90ms以下};游戏线解析服务;候选服务商{腾讯云;阿里云;网宿}}
R 1269 586 743 g CDN{作用{实现游戏静态/资源下载加速};注意{静态/传输服务缓冲;更新的文件有缓存;每次需有有主服建建};应用案例{游戏加载包;热更资源存储;游戏内文件下载服务}}
R 1269 785 901 t 反向代理（Reverse Proxy）{作用{对客户端的访问进行分发到内部服。;可以根据真实服务的业务负载均衡，降低|性能风险。;可以优势分配。};候选{Nginx;HAProxy}}
R 1269 942 968 v 数据对象{作用{备份服与播放存储};应用举例{所存储游戏里更数据}}
R 1269 1010 1294 p 数据库{类型{关系数据库{候选{SQL}};非关系型数据库{候选{MongoDB}};缓存数据库{作用{让数据操作更高效;让内存使用更少的};应用{因为缓存数据库的数据存储内存，可以去做数|据小与有高速性访问出现的业务，可以使用|缓存数据库。};候选{Redis}}};操作{分库;备份/恢复;日志清理;数据统计分析};数据回档{归档是否重成功}}` },
{ h: 257, grid: [18, 21, 1.8233], card: [227, 75, 297], hub: [232, 375, 511, 537, 'server', '7.1.GM后台'], b: `
L 206 197 197 g 管理玩家账户
L 206 292 333 o Admin{权限;角色管理}
L 206 401 401 r 管理参数
L 206 495 619 p 数据查询{运营数据;日志数据;渠道;收入}
L 206 692 734 v 管理更新{热更新管理;包体更新管理}
R 537 178 343 r 管理玩家{发邮件;聊天{禁言};改数据;查日志;封号/踢人}
R 537 416 457 o 管理服务器{配置管理;状态设置}
R 537 533 574 g 管理活动{礼包;兑换码}
R 537 650 650 t 管理游戏{游戏系统/模块管理}` },
{ h: 217, grid: [820, 21, 1.8233], card: [1087, 57, 196], hub: [1097, 261, 1282, 368, 'chart', '7.2.数据统计分析'], b: `
L 1079 194 194 v 游戏数据{玩家行为采集与分析}
L 1079 256 343 tv 服务商候选{ThinkingData{运营数据;游戏分析数据};DataEye;App Annie}
L 1079 389 478 g 归因分析{解决问题{检测广告效果数据，让您投入的广告费不被坑。;归因};服务商候选{Adjust;AppsFlyer}}
R 1298 163 219 rv 解决问题{统计分析运营数据{比如留存、转化、日活等等};统计分析归因数据{知道产品的用量来源};统计分析产品数据}
R 1298 267 635 o 运营数据{新增;留存率{次日留存率;三日留存率;七日留存率};活跃用户{DAU;MAU};付费率;ARPU{Average Revenue per User, 即平均每用户(活|跃用户)收入。};ARPPU{Average Revenue per Paying User, 即平均每|付费用户收入};LTV{用户生命周期价值};维度{设备;账号;角色}}` },
{ h: 316, grid: [12, 21, 1.2062], card: [151, 133, 105], hub: [152, 478, 251, 563, 'server', '7.产品运营支持'], b: `
L 143 147 147 gG 《7.1.GM后台》
L 143 195 195 goG 《7.2.数据统计分析》
L 143 246 529 roP 产品内容{商店认证;自动化部署{测试（QTP）{热更开始时间点};上线（CDN）};热更功能{分级分类{初级事件分类;内容;解锁};活跃与收益};充值测试;CDN配置;运营数据;节日活动{内购;时间};应用配置{版本维护}}
L 143 568 809 pvP 产品商业化{内容精细化{日常;图片;声音;角色（资产消费）;资源（资产消费）};技术接入{新手;支付;定价策（资产消费）};运营后台功能;运营{版本活动;使用数据信息化的建设}}
L 143 847 940 vP 事态{对采购品品牌等创新有策工具;使用有趣生意内容;产品维护;营销话题;营销活动}
R 261 68 407 roP 生产线{自动生产线{解决问题{数值表、平台表、快速配置{产品功能;此配置部分、客户、操作人/玩家};配置;测试}};热更新生产线{解决问题{游戏产品上线需要——游戏热更新环境，包|装。先见中有有关联会内在（游戏出去要求）{每次所有的更以处理，做好投入;每次出最的更快，好于有品的是及时。}};注意事项{数据更新做;数据库/流程检查};版本更新{游戏的自动化建;静态/热更新更快;流程对应不能少做做的;一键实发{自动上线};可变性更新;版本管理{支持、开服、平台、分发等}}}}
R 261 444 493 oP 游戏管理{开服;合服;关停}
R 261 528 747 goP 渠道{国内{App平台{华为;TapTap;应用宝;小米};分享;热更新{开源;模块}};海外{App平台{Google Play;App Store};媒体{Facebook}}}
R 261 797 892 tgP 项目管理{目标/规划{流程{上级的产品更新来没来，这要做到发展流程|的变化应该。};对策{测试;优先;复盘}};外包管理}` },
{ h: 230, grid: [543, 21, 1.2062], card: [697, 63, 122], hub: [701, 318, 815, 418, 'target', '8.1.游戏安全'], b: `
L 690 144 249 t 网络安全{DDos攻击{案例{快速防御手段;数据过滤}};系统和工具攻防;暴力破解;漏洞}
L 690 292 371 g 第三方候选{腾讯安全;腾讯反外挂;易加密;网易易盾}
L 690 430 647 o 方法{外挂检测{检测游戏环境的设备是否有挂机、是否开挂等|工具。};模拟点击;硬件{对外挂或者远大的数据有某工具的时候，有数|据信息工具的对应，要注意查找数据。};心跳{对外挂的系统的与一数据结构服务对比，比如|需求外安全整个进程的功率，更新出来有些|保。};行为分析;代码混淆;加密{为关键数据加密，防止破解游戏中的数据;加密和完整算法运行完整，能够保护}}
R 825 75 675 rg 外挂{#游戏{修改器件{GG;AnDit};辅助工具{内存修改器{对于播放服务的关键数据，提前带有的结果，|校验和存储播放性。};加速器;按键精灵{对于挂机自动刷，让工具自动带你循环游戏。};模拟器{对于运行客户端};抓包工具{对于破解分析网络数据}}};#破解{破解版;盗版客户端};越狱工具/多环境{多开器{iGrimace8;DualAide};云手机{红手指;多多云;雷云兔;云派;星光云;咪咪云};模拟器{雷电模拟器;iTools模拟器;逍遥模拟器;BlueStacks};iOS管理器}}` },
{ h: 276, grid: [1073, 21, 1.2062], card: [1260, 54, 118], hub: [1265, 408, 1376, 505, 'cart', '8.产品商业化'], b: `
L 1256 223 223 tG 《8.1.游戏安全》
L 1256 276 427 g 游戏热更新{解决问题{产品改变更新数据做好数据热更;不做改的产品系统的，让用户下做更新，|更新的做前进等，还在播放做更新。};候选{CI代为特效产线{应用商店平台;构建数据最终版本更新;● 游戏服务器};支持平台{实现iOS/Android}}}
L 1256 469 600 og 游戏运营{解决问题{对上游有效，快速让用户做便捷。};方法{渠道;抽奖;礼包};策略{赠礼品;公会}}
L 1256 645 733 r SEO运营商{解决问题{让产品更有效做得体现出};方法{关键词优化{目前需要查一个关键词的转换，优先|展示产品。};标题、评论{把文要做App商店，更改方式了。}};候选{● 游戏服务器}}
R 1387 106 240 r 运营商数{解决问题{产品服务器提示的稳定环境};候选{AWS;阿里云;腾讯云;UCloud;华为云}}
R 1387 285 311 o 账户与支付运营商{解决问题{实现账户支付快速，更便捷。};候选{Quick{聚合了国内大部分的渠道}}}
R 1387 368 418 go 产品测试提供商{解决问题{其它团队测试人力也有测试用，如果需要|产品测最一定水准等方法品。};候选{Testbird;Testin}}
R 1387 487 512 t 随机测试服务商{解决问题{对各上使用自己的测试用到，和效率测试|分析，定性自己的上比较测测用例测，|有了做了做一个测试。};候选{WeTest}}
R 1387 556 582 v 广告聚合平台{解决问题{对应开发快速接入广告，例如变现。};候选}
R 1387 626 816 pv 运维服务商{解决问题{自建维度与维护{主机;数据库{租用、分发}};支付安全{破解;DDoS攻击;安全漏洞};支撑机器;代理商架构};候选{● 游戏服务器}}` }
];
```
FILE: render.js
```js
const COLORS = { r: '#fb7759', o: '#fda833', g: '#b3c72c', t: '#149cb0', v: '#7d7cba', p: '#9a68ad' };

const ICONS = {
  phone: '<rect x="18" y="0" width="28" height="64" rx="5" fill="#555"/><rect x="21" y="2" width="22" height="58" rx="3" fill="#fff"/><path d="M25 5h14v4H25z" fill="#345"/><path d="M25 20h4v4h-4zM34 20h4v4h-4z" fill="#e57373"/><path d="M25 30h4v4h-4zM34 30h4v4h-4z" fill="#aac"/>',
  server: '<path d="M8 10 24 2 46 8 46 58 26 62 8 52Z" fill="#eee" stroke="#555" stroke-width="3"/><path d="M8 10 26 16V62M26 16 46 8" fill="none" stroke="#555" stroke-width="3"/><rect x="38" y="36" width="20" height="24" rx="3" fill="#ddd" stroke="#555" stroke-width="3"/><path d="M42 36v-6a6 6 0 0 1 12 0v6" fill="none" stroke="#555" stroke-width="3"/>',
  mol: '<path d="M14 14 50 50M50 14 14 50" stroke="#ddd" stroke-width="7"/><g fill="#c9c9d6" stroke="#555" stroke-width="3"><circle cx="14" cy="13" r="10"/><circle cx="50" cy="13" r="10"/><circle cx="14" cy="51" r="10"/><circle cx="50" cy="51" r="10"/><circle cx="32" cy="32" r="7"/></g>',
  tree: '<path d="M32 14v20M32 34 14 52M32 34 50 52" stroke="#778" stroke-width="5"/><rect x="22" y="2" width="20" height="14" rx="3" fill="#e66" stroke="#555" stroke-width="2"/><circle cx="32" cy="32" r="9" fill="#cdf" stroke="#468" stroke-width="3"/><rect x="4" y="46" width="20" height="16" rx="3" fill="#da5" stroke="#754" stroke-width="2"/><rect x="40" y="46" width="20" height="16" rx="3" fill="#da5" stroke="#754" stroke-width="2"/>',
  gears: '<g fill="none" stroke="#555"><circle cx="22" cy="34" r="15" stroke-width="16" stroke-dasharray="6 3.4"/><circle cx="50" cy="16" r="8" stroke-width="9" stroke-dasharray="4 2.3"/><circle cx="50" cy="50" r="7" stroke-width="8" stroke-dasharray="4 2.3"/></g><g fill="none" stroke="#b8b8c4" stroke-width="9"><circle cx="22" cy="34" r="13"/><circle cx="50" cy="16" r="6"/><circle cx="50" cy="50" r="5"/></g>',
  chart: '<g stroke="#555" stroke-width="2"><rect x="6" y="38" width="12" height="24" fill="#e77"/><rect x="24" y="26" width="12" height="36" fill="#fb5"/><rect x="42" y="12" width="14" height="50" fill="#79b"/></g><path d="M6 28 30 12 42 2" fill="none" stroke="#556" stroke-width="4"/>',
  doc: '<rect x="10" y="6" width="44" height="52" fill="#fff"/><path d="M16 18h30M16 30h22" stroke="#579" stroke-width="6"/>',
  target: '<circle cx="30" cy="36" r="25" fill="#e33" stroke="#733" stroke-width="2"/><circle cx="30" cy="36" r="17" fill="#fff"/><circle cx="30" cy="36" r="9" fill="#e33"/><path d="M30 36 54 6" stroke="#445" stroke-width="5"/>',
  cart: '<path d="M2 6h10l8 36h30l8-26H16" fill="#ddd" stroke="#555" stroke-width="4"/><path d="M24 18v22M34 18v22M44 18v22M18 28h38" stroke="#555" stroke-width="3"/><circle cx="24" cy="54" r="6" fill="#a55"/><circle cx="46" cy="54" r="6" fill="#a55"/>',
  blocks: '<g stroke="#555" stroke-width="2"><rect x="8" y="6" width="22" height="24" fill="#e55"/><rect x="34" y="6" width="22" height="24" fill="#fc5"/><rect x="8" y="34" width="22" height="26" fill="#eee"/><rect x="34" y="34" width="22" height="26" fill="#7ac"/></g><path d="M14 24 24 12M38 52l12-12" stroke="#fff" stroke-width="4"/>',
  camera: '<rect x="10" y="8" width="44" height="50" rx="6" fill="#cfd8dc" stroke="#445" stroke-width="3"/><path d="M10 20h44" stroke="#f90" stroke-width="5"/><circle cx="32" cy="40" r="13" fill="#def" stroke="#268" stroke-width="4"/>',
  flame: '<path d="M30 4C12 20 8 30 12 44c4 12 20 18 32 12 10-6 12-18 4-26-2 8-6 10-10 10C36 28 38 14 30 4Z" fill="#fb5" stroke="#a63" stroke-width="3"/><circle cx="50" cy="54" r="7" fill="#fff" stroke="#a63" stroke-width="3"/>',
  light: '<path d="M8 10v44h30" fill="none" stroke="#667" stroke-width="3"/><circle cx="28" cy="30" r="17" fill="#fc4" stroke="#c80" stroke-width="2"/><path d="M38 58 60 58 50 40Z" fill="#fff" stroke="#555" stroke-width="3"/>',
  cubes: '<rect x="8" y="8" width="30" height="44" fill="#dfe8ee" stroke="#355" stroke-width="4"/><path d="M8 18h30M22 8v10" stroke="#355" stroke-width="3"/><rect x="34" y="28" width="24" height="30" fill="#9cb" stroke="#355" stroke-width="4"/>',
  pad: '<path d="M12 10h12l4 6h8l4-6h12l8 40c0 10-10 10-14 0l-4-8H22l-4 8c-4 10-14 10-14 0Z" fill="#333"/><circle cx="20" cy="26" r="5" fill="#bbb"/><circle cx="44" cy="26" r="5" fill="#bbb"/>',
  machine: '<path d="M14 6h30l12 12v34H14Z" fill="#e6eef0" stroke="#455" stroke-width="3"/><path d="M8 56h50M20 18v24M26 44h20" stroke="#455" stroke-width="4"/><rect x="28" y="20" width="16" height="14" fill="#4a8"/>',
  ears: '<path d="M10 44V30a22 22 0 0 1 44 0v14" fill="none" stroke="#444" stroke-width="5"/><rect x="6" y="36" width="12" height="22" rx="5" fill="#d88" stroke="#444" stroke-width="3"/><rect x="46" y="36" width="12" height="22" rx="5" fill="#d88" stroke="#444" stroke-width="3"/>',
  file: '<path d="M4 4h36l20 16v42H4Z" fill="#fc4" stroke="#964" stroke-width="3"/><path d="M18 12h20l12 10v32H18Z" fill="#fff" stroke="#555" stroke-width="3"/><path d="M24 28h18M24 38h18" stroke="#888" stroke-width="3"/>',
  people: '<g stroke="#333" stroke-width="3"><path d="M4 60V42l12-8 12 8v18Z" fill="#e66"/><path d="M36 60V42l12-8 12 8v18Z" fill="#5aa"/><path d="M20 62V36l12-8 12 8v26Z" fill="#fff"/><circle cx="16" cy="24" r="8" fill="#fca"/><circle cx="48" cy="24" r="8" fill="#fca"/><circle cx="32" cy="14" r="9" fill="#fca"/></g>',
  bug: '<path d="M8 46 40 4l14 4-6 34-26 8Z" fill="#79d" stroke="#335" stroke-width="3"/><path d="M26 38 42 16M6 58l16-10 20 8" fill="none" stroke="#335" stroke-width="4"/>'
};

const SIZE = { leaf: 15, topic: 20 };
const pen = document.createElement('canvas').getContext('2d');
function measure(lines, kind) {
  pen.font = `700 ${SIZE[kind]}px "Lato", "Noto Sans CJK SC", sans-serif`;
  return Math.max(...lines.map(l => pen.measureText(l).width));
}

// Reads "topic{child;child}" into a tree.
function parse(src) {
  let i = 0;
  function node() {
    let s = '';
    while (i < src.length && !'{};'.includes(src[i])) s += src[i++];
    const n = { kids: [] };
    if (s[0] === '#') { n.boxed = true; s = s.slice(1); }
    [s, n.icon] = s.split('@');
    n.lines = s.split('|');
    if (src[i] === '{') {
      do { i++; const k = node(); if (k.lines[0]) n.kids.push(k); } while (src[i] === ';');
      i++;
    }
    return n;
  }
  return node();
}

function leaves(n) { return n.kids.length ? n.kids.flatMap(leaves) : [n]; }
function settle(n) {
  if (!n.kids.length) return;
  n.kids.forEach(settle);
  n.y = (n.kids[0].y + n.kids[n.kids.length - 1].y) / 2;
}

const r = v => Math.round(v * 10) / 10;
function text(x, y, lines, cls, gap) {
  return lines.map((l, i) => `<text class="${cls}" x="${r(x)}" y="${r(y + i * gap)}">${l}</text>`).join('');
}
function rect(x, y, w, h, rx, cls, color) {
  return `<rect class="${cls}" x="${r(x)}" y="${r(y)}" width="${r(w)}" height="${r(h)}" rx="${rx}"${color ? ` stroke="${color}"` : ''}/>`;
}
function icon(name, x, y, size) {
  return `<g transform="translate(${r(x)} ${r(y)}) scale(${r(size / 6.4) / 10})">${ICONS[name]}</g>`;
}

// Draws the children of a topic whose outer edge is at x.
function drawKids(n, x, gap, dir, color) {
  if (!n.kids.length) return '';
  const many = n.kids.length > 1;
  const j = x + gap * dir;
  let out = `<path class="line" stroke="${color}" d="M${r(x)} ${r(n.y)}H${r(j)}"/>`;
  for (const k of n.kids) {
    const w = measure(k.lines, 'leaf');
    const edge = k.boxed ? j + 12 * dir : j + 24 * dir;
    const tx = k.boxed ? edge + 8 * dir : edge;
    const end = k.boxed ? tx + (w + 8) * dir : tx + (w + (k.kids.length ? 0 : 9)) * dir;
    const to = k.boxed ? edge : end;
    const dy = k.y - n.y;
    const c = Math.min(6, Math.abs(dy)) * Math.sign(dy);
    out += many && dy
      ? `<path class="line" stroke="${color}" d="M${r(j)} ${r(n.y)}V${r(k.y - c)}Q${r(j)} ${r(k.y)} ${r(j + 6 * dir)} ${r(k.y)}H${r(to)}"/>`
      : `<path class="line" stroke="${color}" d="M${r(j)} ${r(k.y)}H${r(to)}"/>`;
    const left = dir > 0 ? tx : tx - w;
    if (k.boxed) {
      out += rect(left - 8, k.y - 16, w + 16, 32, 5, 'box');
      out += text(left, k.y, k.lines, 'leaf start', 22);
    } else {
      out += text(left, k.y - 17 - (k.lines.length - 1) * 22, k.lines, 'leaf start', 22);
    }
    out += drawKids(k, end, k.boxed ? 12 : 24, dir, color);
  }
  return out;
}

function drawBranch(line, X, Y, hub) {
  const [, side, bx, top, bottom, code, src] = line.match(/^(\S) (\S+) (\S+) (\S+) (\S+) (.*)$/);
  const dir = side === 'R' ? 1 : -1;
  const tints = code.replace(/[A-Z]/g, '');
  const color = COLORS[tints[0]];
  const twig = COLORS[tints[1]] || color;
  const shape = { G: 'green', P: 'pill', W: 'pale', D: 'dark' }[code.slice(-1)] || 'box';
  const root = parse(src);
  const ends = leaves(root);
  const weight = n => 1 + (n.lines.length - 1) * 0.5;
  const total = ends.slice(1).reduce((s, n) => s + weight(n), 0);
  const step = total ? (Y(+bottom) - Y(+top)) / total : 0;
  let y = Y(+top);
  ends.forEach((n, i) => { if (i) y += step * weight(n); n.y = y; });
  settle(root);

  const x = X(+bx);
  const w = measure(root.lines, 'topic');
  const boxW = w + 38;
  const h = root.icon ? 128 : shape === 'green' ? 54 : 24 + root.lines.length * 24;
  const left = dir > 0 ? x : x - boxW;
  const sx = dir > 0 ? hub.x2 : hub.x1;
  const dx = x - sx;
  const stem = `<path class="stem" stroke="${color}" d="M${r(sx)} ${r(hub.cy)}C${r(sx + dx * 0.5)} ${r(hub.cy + (root.y - hub.cy) * 0.3)} ${r(sx + dx * 0.3)} ${r(root.y)} ${r(x)} ${r(root.y)}"/>`;
  const round = shape === 'pill' || shape === 'pale' ? 22 : 7;
  let out = drawKids(root, x + boxW * dir, 15, dir, twig);
  out += rect(left, root.y - h / 2, boxW, h, round, shape, shape === 'box' ? '' : color);
  if (root.icon) out += icon(root.icon, left + boxW / 2 - 27, root.y - 52, 54);
  const ty = root.icon ? root.y + 38 : root.y - (root.lines.length - 1) * 12;
  const light = shape === 'green' || shape === 'dark' ? ' topic-light' : '';
  out += text(left + 19, ty, root.lines, 'topic start' + light, 24);
  return [stem, out];
}

// Fishbone diagrams at the top left of the process map.
function drawFishbone(X, Y) {
  const line = (a, b, c, d) => `<path class="line" stroke="${COLORS.g}" d="M${r(X(a))} ${r(Y(b))}L${r(X(c))} ${r(Y(d))}"/>`;
  const tag = (x, y, s) => {
    const w = measure([s], 'leaf');
    return rect(X(x) - w / 2 - 8, Y(y) - 16, w + 16, 32, 5, 'box') + text(X(x), Y(y), [s], 'leaf middle', 22);
  };
  let out = line(552, 106, 803, 106) + line(675, 205, 792, 205) + line(812, 106, 812, 596) + line(556, 89, 603, 89) + line(630, 94, 680, 94);
  [[603, 48, '分析'], [675, 54, '设计'], [737, 54, '开发'], [786, 61, '测试']].forEach(([x, y, s]) => {
    out += line(x, y + 8, x + 14, 106) + tag(x, y, s);
  });
  [[601, 152, '沟通'], [668, 171, '风险'], [734, 152, '进度'], [777, 171, '复盘']].forEach(([x, y, s]) => {
    out += line(x, y - 8, x + 13, 106) + tag(x, y, s);
  });
  [[693, 186, '需求讨论会'], [723, 186, '排期会'], [750, 186, '日会'], [776, 186, '复盘会']].forEach(([x, y, s]) => {
    out += line(x, 192, x + 8, 205) + tag(x, y, s);
  });
  [[689, 226, 'Release'], [718, 226, 'Sprint Plan'], [744, 226, 'Daily Scrum'], [772, 226, 'User Report']].forEach(([x, y, s]) => {
    out += line(x, 220, x + 8, 205) + tag(x, y, s);
  });
  out += tag(807, 106, '问题');
  const note = (x, y, lines) => { out += text(X(x), Y(y), lines, 'leaf start', 22); };
  note(558, 73, ['需要做好需求的分析，确定目标方向，', '需求的优先级，评审相关的需求，', '需求需要明确。']);
  note(632, 79, ['考虑相关的技术选型和架构，', '扩展性和稳定性。']);
  note(695, 79, ['代码规范，做好模块的划分，', '定期做代码的评审和重构。']);
  note(757, 86, ['测试用例，自动化测试。']);
  note(584, 126, ['站会、周会、日报']);
  note(624, 126, ['识别各个阶段的风险点，', '及时的沟通以及处理，', '对于重要的风险要提前', '准备方案。']);
  note(702, 126, ['确认每个节点的进度']);
  note(762, 126, ['总结问题与改进']);
  note(758, 145, ['持续优化流程']);
  return out;
}

function drawMap(m) {
  const [ox, oy, gx] = m.grid;
  const u = 500 / (m.card[2] / gx);
  const X = v => (v - ox) / gx * u;
  const Y = v => (v - oy) / 3 * u;
  const [x1, y1, x2, y2, name, title, note] = m.hub;
  const hub = { x1: X(x1), x2: X(x2), cy: Y((y1 + y2) / 2) };
  const parts = m.b.trim().split('\n').map(l => drawBranch(l, X, Y, hub));
  const cx = X(m.card[0]), cy = Y(m.card[1]);
  const mid = (hub.x1 + hub.x2) / 2;
  const hubH = Y(y2) - Y(y1);
  return `<figure class="map"><svg viewBox="0 0 ${r(400 * u)} ${r(m.h * u)}" role="img" aria-label="${title}">
${parts.map(p => p[0]).join('')}${m.fish ? drawFishbone(X, Y) : ''}${parts.map(p => p[1]).join('')}
${rect(hub.x1, Y(y1), hub.x2 - hub.x1, hubH, 8, 'hub')}
${icon(name, mid - 29, Y(y1) + hubH * 0.16, 58)}
${text(mid, Y(y1) + hubH * 0.74, [title], 'hub-title', 0)}
${note ? `<path d="M${r(hub.x2 - 66)} ${r(hub.cy + 30)}h28m-28 10h28m-28 10h18" stroke="#fff" stroke-width="3"/>` : ''}
<g transform="translate(${r(cx)} ${r(cy)})">
<rect class="card-body" width="500" height="162"/><rect class="card-side" y="71" width="87" height="91"/><rect class="card-head" width="500" height="71"/>
<text class="card-title" x="18" y="36">网络手游开发</text>
<text class="card-label" x="44" y="139">更新日期</text>
<a href="https://github.com/gonglei007/GameDevMind"><text class="card-link" x="99" y="95">https://github.com/gonglei007/GameDevMind</text></a>
<text class="card-date" x="99" y="139">2022-08-12</text>
</g></svg></figure>`;
}

document.getElementById('gallery').innerHTML = MAPS.map(drawMap).join('');
```
